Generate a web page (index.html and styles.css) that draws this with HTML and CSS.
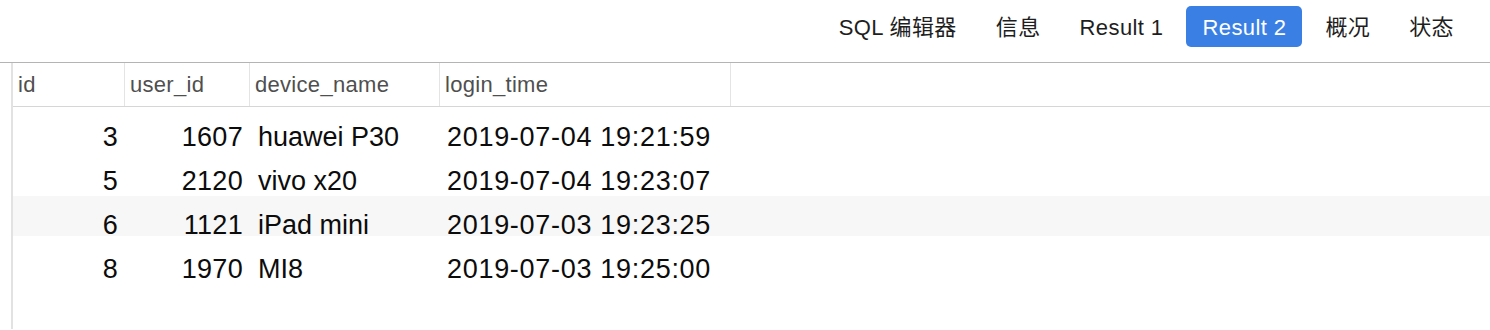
FILE: index.html
```html
<!DOCTYPE html>
<html lang="en">
<head>
    <meta charset="UTF-8">
    <title>Result 2</title>
    <link rel="stylesheet" href="styles.css">
</head>
<body>
    <!-- Tab bar -->
    <div class="tabbar">
        <div class="tab">SQL 编辑器</div>
        <div class="tab">信息</div>
        <div class="tab">Result 1</div>
        <div class="tab active">Result 2</div>
        <div class="tab">概况</div>
        <div class="tab">状态</div>
    </div>

    <!-- Result grid -->
    <div class="grid">
        <div class="head">
            <div class="cell c-id">id</div>
            <div class="cell c-user">user_id</div>
            <div class="cell c-device">device_name</div>
            <div class="cell c-time">login_time</div>
        </div>
        <div class="rows">
            <div class="row">
                <div class="cell c-id num">3</div>
                <div class="cell c-user num">1607</div>
                <div class="cell c-device">huawei P30</div>
                <div class="cell c-time">2019-07-04 19:21:59</div>
            </div>
            <div class="row">
                <div class="cell c-id num">5</div>
                <div class="cell c-user num">2120</div>
                <div class="cell c-device">vivo x20</div>
                <div class="cell c-time">2019-07-04 19:23:07</div>
            </div>
            <div class="row striped">
                <div class="cell c-id num">6</div>
                <div class="cell c-user num">1121</div>
                <div class="cell c-device">iPad mini</div>
                <div class="cell c-time">2019-07-03 19:23:25</div>
            </div>
            <div class="row">
                <div class="cell c-id num">8</div>
                <div class="cell c-user num">1970</div>
                <div class="cell c-device">MI8</div>
                <div class="cell c-time">2019-07-03 19:25:00</div>
            </div>
        </div>
    </div>
</body>
</html>
```

FILE: styles.css
```css
body {
    margin: 0;
    background-color: #fff;
    font-family: "Liberation Sans", "Noto Sans CJK SC", sans-serif;
    color: #111;
    width: 1490px;
    height: 330px;
    overflow: hidden;
}

.tabbar {
    height: 63px;
    border-bottom: 1px solid #b4b4b4;
    display: flex;
    justify-content: flex-end;
    align-items: flex-start;
    gap: 7px;
    padding: 6px 20px 0 0;
    box-sizing: border-box;
}

.tab {
    height: 41px;
    line-height: 43px;
    padding: 0 16px;
    font-size: 22px;
    letter-spacing: 0.4px;
    color: #1e1e1e;
    border-radius: 5px;
}

.tab.active {
    background-color: #3a80e4;
    color: #fff;
}

.grid {
    margin-left: 11px;
    border-left: 2px solid #e2e2e2;
    height: 266px;
}

.head {
    display: flex;
    height: 43px;
    border-bottom: 1px solid #d6d6d6;
    font-size: 22px;
    color: #4f4f4f;
    letter-spacing: 0.3px;
}

.head .cell {
    line-height: 43px;
    padding-left: 5px;
    border-right: 1px solid #e4e4e4;
    box-sizing: border-box;
}

.rows {
    display: flex;
    flex-direction: column;
    gap: 4px;
    padding-top: 1px;
}

.row {
    display: flex;
    height: 40px;
    font-size: 27px;
    color: #0c0c0c;
}

.row.striped {
    background-color: #f7f7f7;
}

.row .cell {
    padding-top: 18px;
    line-height: 22px;
    box-sizing: border-box;
}

.row .num {
    text-align: right;
    padding-right: 7px;
    letter-spacing: 0.3px;
}

.row .c-device {
    padding-left: 8px;
}

.row .c-time {
    padding-left: 7px;
    letter-spacing: 0.7px;
}

.c-id {
    width: 112px;
}

.c-user {
    width: 125px;
}

.c-device {
    width: 190px;
}

.c-time {
    width: 291px;
}
```
